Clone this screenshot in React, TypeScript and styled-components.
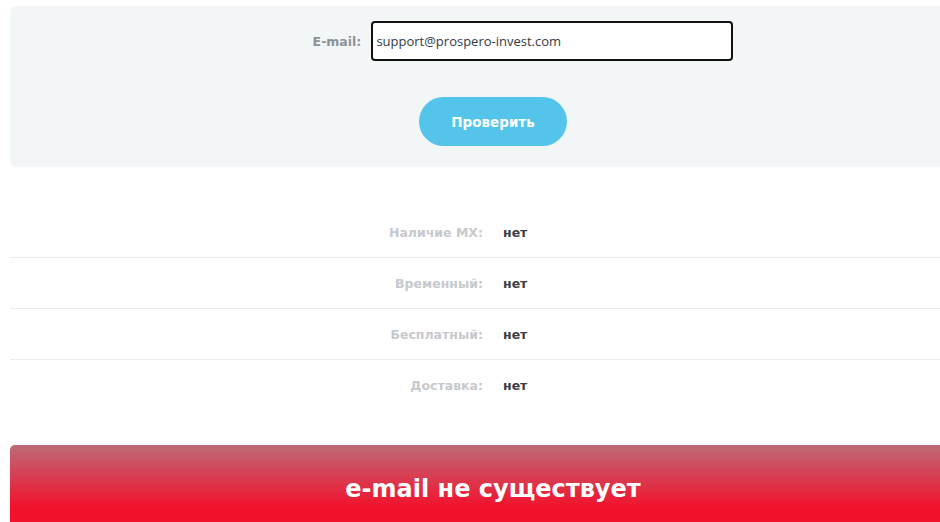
import React from 'react';
import styled, {createGlobalStyle} from 'styled-components';

const GlobalStyle = createGlobalStyle`
  html, body {
    margin: 0;
    padding: 0;
    background: #fff;
    overflow: hidden;
  }
`;

const Page = styled.div`
  width: 966px;
  padding: 6px 0 0 10px;
  font-family: "DejaVu Sans", "Noto Sans", sans-serif;
`;

const CheckPanel = styled.form`
  background: #f3f6f7;
  border-radius: 6px 0 0 6px;
  padding: 15px 0 21px;
  display: flex;
  flex-direction: column;
  align-items: center;
  gap: 36px;
`;

const FieldRow = styled.label`
  display: flex;
  align-items: center;
  gap: 10px;
  padding-left: 60px;
`;

const FieldLabel = styled.span`
  font-size: 12.5px;
  font-weight: bold;
  color: #8d9297;
`;

const EmailInput = styled.input`
  box-sizing: border-box;
  width: 362px;
  height: 40px;
  border: 2px solid #111;
  border-radius: 4px;
  background: #fff;
  padding: 0 3px;
  font-family: "Open Sans", sans-serif;
  font-size: 13px;
  color: #333a45;
  outline: none;
`;

const SubmitButton = styled.button`
  width: 148px;
  height: 49px;
  border: none;
  border-radius: 25px;
  background: #55c4eb;
  color: #fff;
  font-family: "DejaVu Sans", sans-serif;
  font-weight: bold;
  font-size: 13.5px;
  cursor: pointer;
`;

const ResultList = styled.dl`
  margin: 40px 0 0;
`;

const ResultRow = styled.div<{$last?: boolean}>`
  display: grid;
  grid-template-columns: 1fr 1fr;
  column-gap: 20px;
  align-items: center;
  height: 50px;
  border-bottom: ${p => (p.$last ? 'none' : '1px solid #ececec')};
`;

const ResultName = styled.dt`
  text-align: right;
  font-size: 12.5px;
  font-weight: bold;
  color: #c6c9cd;
`;

const ResultValue = styled.dd`
  margin: 0;
  font-size: 12.5px;
  font-weight: bold;
  color: #3b3e43;
`;

const StatusBanner = styled.div`
  margin-top: 35px;
  height: 90px;
  border-radius: 5px 0 0 0;
  background: linear-gradient(to bottom, #be6a78 0%, #f2112b 70%);
  color: #fff;
  display: flex;
  justify-content: center;
  padding-top: 30px;
  box-sizing: border-box;
  font-size: 24px;
  font-weight: bold;
`;

const results = [
    {name: 'Наличие MX:', value: 'нет'},
    {name: 'Временный:', value: 'нет'},
    {name: 'Бесплатный:', value: 'нет'},
    {name: 'Доставка:', value: 'нет'},
];

const App = () => {
    return <>
        <GlobalStyle/>
        <Page>
            <CheckPanel onSubmit={e => e.preventDefault()}>
                <FieldRow>
                    <FieldLabel>E-mail:</FieldLabel>
                    <EmailInput type="text" defaultValue="support@prospero-invest.com"/>
                </FieldRow>
                <SubmitButton type="submit">Проверить</SubmitButton>
            </CheckPanel>
            <ResultList>
                {results.map((r, i) =>
                    <ResultRow key={r.name} $last={i === results.length - 1}>
                        <ResultName>{r.name}</ResultName>
                        <ResultValue>{r.value}</ResultValue>
                    </ResultRow>)}
            </ResultList>
            <StatusBanner>e-mail не существует</StatusBanner>
        </Page>
    </>;
};

export default App;
